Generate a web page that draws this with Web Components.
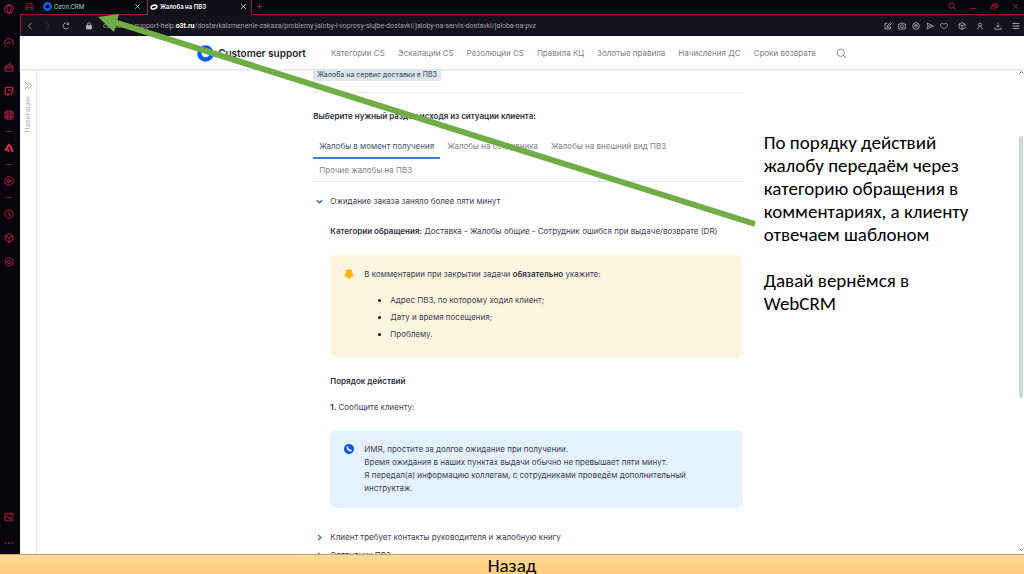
<!DOCTYPE html>
<html lang="ru">
<head>
<meta charset="utf-8">
<title>Жалоба на ПВЗ</title>
<style>
    body {
        margin: 0;
        background: #fff;
        font-family: Inter, "Noto Sans", sans-serif;
    }
</style>
</head>
<body>
<slide-page></slide-page>

<script>
// Icon drawings, all on a 16x16 grid
const ICONS = {
    opera: '<circle cx="8" cy="8" r="7"/><ellipse cx="8" cy="8" rx="3.4" ry="6"/>',
    gauge: '<path d="M4.500 14A7 7 0 1 1 14.500 10.500M11 6L7.500 9.500M5 9a3.400 3.400 0 0 1 3-3"/>',
    bag: '<path d="M2 6.5h12v8H2zM2 9.5h12M5 6.500L9.500 2l1.500 4.500"/>',
    twitch: '<path d="M3 2h11v8l-3 3H8l-2 2v-2H2V5zM7.500 5v3.500M11 5v3.500" stroke-width="2"/>',
    grid: '<rect x="1.500" y="1.500" width="13" height="13" rx="2"/><path d="M5 1.500v13M11 1.500v13M1.500 5h13M1.500 11h13M5 8h6"/>',
    aria: '<path d="M8.500 1.500L2 12.500M9.500 4l4.500 10M7.500 10l-1 4" stroke-width="3.200"/>',
    play: '<circle cx="8" cy="8" r="6.700"/><path d="M6 5l5.500 3L6 11z"/>',
    clock: '<circle cx="8" cy="8" r="6.700"/><path d="M8 3.500V8l2.500 3"/>',
    cube: '<path d="M8 1l6 3.300v7.200L8 15l-6-3.500V4.300zM2 4.300l6 3.500 6-3.500M8 7.800V15"/>',
    gear: '<path d="M8 1l3 1.500 3 2v7l-3 2L8 15l-3-1.500-3-2v-7l3-2z"/><circle cx="8" cy="8" r="2.500"/>',
    image: '<path d="M14.500 8V2h-13v12H8M1.500 10l4-3 3 3 2-2 2 1M4 5h2M9 4.500h3"/><circle cx="12" cy="12" r="2.500"/>',
    dots: '<path d="M1 8h3M6.500 8h3M12 8h3" stroke-width="2"/>',
    game: '<path d="M3.500 3h9v7h-9zM1.500 8v5h3v-3M14.500 8v5h-3v-3M4.500 6.500h2M9.500 6.500h2"/>',
    ring: '<circle cx="8" cy="8" r="5.700" stroke-width="4.200"/>',
    oval: '<ellipse cx="8" cy="8" rx="6" ry="3.600" transform="rotate(-18 8 8)" stroke-width="3.200"/>',
    close: '<path d="M2.500 2.500l11 11M13.500 2.500l-11 11"/>',
    plus: '<path d="M8 1.500v13M1.500 8h13"/>',
    search: '<circle cx="7" cy="7" r="5.300"/><path d="M11 11l4 4"/>',
    minimize: '<path d="M1 13h14"/>',
    restore: '<path d="M1.500 6h9v8h-9zM5 6V2h9.500v8h-4M5 10l3-3"/>',
    back: '<path d="M11 1.500L5 8l6 6.500"/>',
    forward: '<path d="M5 1.500L11 8l-6 6.500"/>',
    reload: '<path d="M13.500 10.500A6 6 0 1 1 13 4.500M13.500 1v4h-4"/>',
    lock: '<path d="M3 7h10v7H3z" fill="currentColor"/><path d="M5 7V4.500a3 3 0 0 1 6 0V7"/>',
    edit: '<path d="M7 2.500H2v11.500h11V9M6 10l1-3 6-6 2 2-6 6zM5 12h6"/>',
    camera: '<path d="M1.500 4h3l1.500-2h4l1.500 2h3v10h-13z"/><circle cx="8" cy="8.500" r="3"/>',
    shield: '<circle cx="8" cy="8" r="6.700"/><path d="M5.500 5.500h5v3L8 11 5.500 8.500zM8 6v3"/>',
    send: '<path d="M2 2l13 6-13 6 2-6zM4 8h6"/>',
    heart: '<path d="M8 14.500L2 8.500C-1 4 5 0 8 4.500 11 0 17 4 14 8.500z"/>',
    user: '<circle cx="8" cy="5" r="3.200"/><path d="M3.500 14.500c0-7 9-7 9 0"/>',
    download: '<path d="M8 1v9M4.500 7L8 10.500 11.500 7M1.500 11v3.500h13V11"/>',
    sliders: '<path d="M1 3h14M1 8h14M1 13h14M5 1.500v3M11 6.500v3M6 11.500v3"/>',
    chevrons: '<path d="M2 2l6 6-6 6M8 2l6 6-6 6"/>',
    down: '<path d="M2 5l6 6 6-6"/>',
    right: '<path d="M5 2l6 6-6 6"/>',
    up: '<path d="M2 11l6-6 6 6"/>',
    bell: '<path d="M8 0.500a5.300 5.300 0 0 1 5.300 5.300L16 12H0L2.700 5.800A5.300 5.300 0 0 1 8 .5zM4.500 12h7a3.500 3.500 0 0 1-7 0z" fill="currentColor" stroke="none"/>',
    phone: '<circle cx="8" cy="8" r="8" fill="currentColor" stroke="none"/><path d="M5.500 4c0 4.500 2 6.500 6.500 6.500" stroke="#fff" stroke-width="2.600"/>'
};

// Square icon, sized with --size, line weight with --stroke
class UiIcon extends HTMLElement {
    connectedCallback() {
        if (this.shadowRoot) return;
        this.attachShadow({ mode: 'open' }).innerHTML = `
            <style>
                :host { display: block; flex: none; width: var(--size, 9px); height: var(--size, 9px); }
                svg { display: block; width: 100%; height: 100%; fill: none; stroke: currentColor; stroke-width: var(--stroke, 1.6); }
            </style>
            <svg viewBox="0 0 16 16" aria-hidden="true">${ICONS[this.getAttribute('name')]}</svg>
        `;
    }
}
customElements.define('ui-icon', UiIcon);

const RESET = `
    * { box-sizing: border-box; }
    button { margin: 0; padding: 0; border: 0; background: none; font: inherit; color: inherit; text-align: left; cursor: pointer; }
    a { color: inherit; text-decoration: none; }
`;

// Narrow launcher strip at the left
class SideStrip extends HTMLElement {
    constructor() {
        super();
        const button = (name, label) => `<button class="${name}" aria-label="${label}"><ui-icon name="${name}"></ui-icon></button>`;
        this.attachShadow({ mode: 'open' }).innerHTML = `
            <style>${RESET}
                :host {
                    display: flex;
                    flex-direction: column;
                    align-items: center;
                    gap: 14px;
                    padding: 4px 3px 6px 0;
                    background: #06050b;
                    color: #b51f45;
                    --size: 10px;
                }
                .opera { margin-bottom: 10px; }
                hr { width: 6px; height: 1px; margin: -3px 0; border: 0; background: #7e1934; }
                .end { display: flex; flex-direction: column; gap: 16px; margin-top: auto; }
                .aria { color: #f52c55; }
            </style>
            ${button('opera', 'Меню')}
            ${button('gauge', 'Монитор')}
            ${button('bag', 'Магазин')}
            ${button('twitch', 'Twitch')}
            ${button('grid', 'Виджеты')}
            <hr>
            ${button('aria', 'Aria')}
            <hr>
            ${button('play', 'Плеер')}
            <hr>
            ${button('clock', 'История')}
            ${button('cube', 'Расширения')}
            ${button('gear', 'Настройки')}
            <div class="end">
                ${button('image', 'Обои')}
                ${button('dots', 'Ещё')}
            </div>
        `;
    }
}
customElements.define('side-strip', SideStrip);

// Tabs of the browser window
class TabStrip extends HTMLElement {
    constructor() {
        super();
        this.attachShadow({ mode: 'open' }).innerHTML = `
            <style>${RESET}
                :host {
                    display: flex;
                    height: 15px;
                    background: #06050b;
                    color: #c9c7cf;
                    font: 6px/13px Inter, "Noto Sans", sans-serif;
                    --size: 7px;
                }
                .lead, .tab, .rest { display: flex; align-items: center; border-bottom: 1px solid #8f1d3b; }
                .lead { width: 22px; padding: 0 0 2px 5px; color: #a51c40; --size: 9px; }
                .tab { width: 105px; padding: 0 6px 2px 1px; }
                .tab button:last-child { margin-left: auto; }
                .tab ui-icon[name="ring"] { color: #1463ff; --size: 9px; }
                .tab.active {
                    padding: 0 4px 2px 2px;
                    border: solid #8f1d3b;
                    border-width: 0 1px;
                    background: #110f18;
                    color: #fff;
                    font-weight: 600;
                }
                .tab.active ui-icon[name="oval"] { --size: 8px; }
                .title { display: flex; align-items: center; gap: 2px; }
                .rest { flex: 1; gap: 14px; padding: 0 5px 2px 4px; color: #d0234d; }
                .rest button:nth-child(2) { margin-left: auto; --size: 8px; }
            </style>
            <div class="lead"><ui-icon name="game"></ui-icon></div>
            <div class="tab">
                <button class="title"><ui-icon name="ring"></ui-icon>Ozon.CRM</button>
                <button aria-label="Закрыть вкладку"><ui-icon name="close"></ui-icon></button>
            </div>
            <div class="tab active">
                <button class="title"><ui-icon name="oval"></ui-icon>Жалоба на ПВЗ</button>
                <button aria-label="Закрыть вкладку"><ui-icon name="close"></ui-icon></button>
            </div>
            <div class="rest">
                <button aria-label="Новая вкладка"><ui-icon name="plus"></ui-icon></button>
                <button aria-label="Поиск"><ui-icon name="search"></ui-icon></button>
                <button aria-label="Свернуть"><ui-icon name="minimize"></ui-icon></button>
                <button aria-label="Развернуть"><ui-icon name="restore"></ui-icon></button>
                <button aria-label="Закрыть"><ui-icon name="close"></ui-icon></button>
            </div>
        `;
    }
}
customElements.define('tab-strip', TabStrip);

// Address bar with the page tools
class AddressBar extends HTMLElement {
    constructor() {
        super();
        this.attachShadow({ mode: 'open' }).innerHTML = `
            <style>${RESET}
                :host {
                    display: flex;
                    align-items: center;
                    height: 21px;
                    padding: 0 4px 0 5px;
                    border-left: 1px solid #8f1d3b;
                    background: #14121b;
                    color: #b5b3bb;
                    font: 7px/12px Roboto, "Noto Sans", sans-serif;
                    --size: 8px;
                }
                .nav { display: flex; gap: 10px; margin-right: 15px; }
                .nav button:nth-child(2) { opacity: .3; }
                .url { margin-left: 10px; white-space: nowrap; color: #a3a1aa; }
                .url b { color: #fff; }
                .tools { display: flex; gap: 6px; margin-left: auto; }
                .tools button:nth-child(n + 6) { margin-left: 4px; }
            </style>
            <div class="nav">
                <button aria-label="Назад"><ui-icon name="back"></ui-icon></button>
                <button aria-label="Вперёд"><ui-icon name="forward"></ui-icon></button>
                <button aria-label="Обновить"><ui-icon name="reload"></ui-icon></button>
            </div>
            <ui-icon name="lock"></ui-icon>
            <a class="url" href="#">customer-support-help.<b>o3t.ru</b>/dostavkaizmenenie-zakaza/problemy-jaloby-i-voprosy-slujbe-dostavki/jaloby-na-servis-dostavki/jaloba-na-pvz</a>
            <div class="tools">
                <button aria-label="Заметка"><ui-icon name="edit"></ui-icon></button>
                <button aria-label="Снимок"><ui-icon name="camera"></ui-icon></button>
                <button aria-label="Защита"><ui-icon name="shield"></ui-icon></button>
                <button aria-label="Отправить"><ui-icon name="send"></ui-icon></button>
                <button aria-label="В избранное"><ui-icon name="heart"></ui-icon></button>
                <button aria-label="Расширения"><ui-icon name="cube"></ui-icon></button>
                <button aria-label="Профиль"><ui-icon name="user"></ui-icon></button>
                <button aria-label="Загрузки"><ui-icon name="download"></ui-icon></button>
                <button aria-label="Настройки"><ui-icon name="sliders"></ui-icon></button>
            </div>
        `;
    }
}
customElements.define('address-bar', AddressBar);

// Site header with the logo and links
class SiteHeader extends HTMLElement {
    constructor() {
        super();
        this.attachShadow({ mode: 'open' }).innerHTML = `
            <style>${RESET}
                :host {
                    box-sizing: border-box;
                    display: flex;
                    align-items: center;
                    justify-content: center;
                    height: 34px;
                    padding-top: 1px;
                    border-bottom: 1px solid #e4e5e8;
                    box-shadow: 0 1px 1px #f3f3f5;
                    background: #fff;
                    color: #7d8087;
                    font-size: 8px;
                    line-height: 13px;
                    white-space: nowrap;
                }
                .brand { display: flex; align-items: center; gap: 4px; margin-right: 25px; color: #1c1f26; font-size: 10px; font-weight: 600; }
                .brand ui-icon { color: #0b5cff; --size: 17px; }
                nav { display: flex; gap: 13px; margin-right: 20px; }
                .search { --size: 11px; --stroke: 1.4; }
            </style>
            <a class="brand" href="#"><ui-icon name="ring"></ui-icon>Customer support</a>
            <nav>
                <a href="#">Категории CS</a>
                <a href="#">Эскалации CS</a>
                <a href="#">Резолюции CS</a>
                <a href="#">Правила КЦ</a>
                <a href="#">Золотые правила</a>
                <a href="#">Начисления ДС</a>
                <a href="#">Сроки возврата</a>
            </nav>
            <button class="search" aria-label="Поиск"><ui-icon name="search"></ui-icon></button>
        `;
    }
}
customElements.define('site-header', SiteHeader);

// Coloured note: icon at the left, slotted text at the right
class NoteBox extends HTMLElement {
    constructor() {
        super();
        this.attachShadow({ mode: 'open' }).innerHTML = `
            <style>
                :host {
                    display: flex;
                    gap: 10px;
                    padding: 13px 14px;
                    border-radius: 7px;
                    background: var(--note-bg);
                }
                ui-icon { margin-top: 1px; color: var(--note-accent); --size: 10px; }
                .text { flex: 1; }
            </style>
            <ui-icon name="${this.getAttribute('icon')}"></ui-icon>
            <div class="text"><slot></slot></div>
        `;
    }
}
customElements.define('note-box', NoteBox);

// Expandable row
class FoldRow extends HTMLElement {
    constructor() {
        super();
        const open = this.hasAttribute('open');
        this.attachShadow({ mode: 'open' }).innerHTML = `
            <style>${RESET}
                :host { display: block; }
                button { display: flex; align-items: center; gap: 7px; padding-left: 3px; }
                ui-icon { color: #2463cf; --size: 7px; --stroke: 3; }
                .body { padding-left: 17px; }
            </style>
            <button aria-expanded="${open}"><ui-icon name="${open ? 'down' : 'right'}"></ui-icon><slot name="title"></slot></button>
            <div class="body"><slot></slot></div>
        `;
    }
}
customElements.define('fold-row', FoldRow);

// The article itself
class HelpArticle extends HTMLElement {
    constructor() {
        super();
        this.attachShadow({ mode: 'open' }).innerHTML = `
            <style>${RESET}
                :host {
                    display: block;
                    min-width: 0;
                    color: #3c4250;
                    font-size: 8px;
                    line-height: 13px;
                }
                p, ul, h2, h3 { margin: 0; font-size: inherit; }
                h2, h3, b { font-weight: 600; color: #2b303c; }
                .top { display: flex; align-items: flex-start; height: 23px; border-bottom: 1px solid #eeeff1; }
                .chip { padding: 0 4px 1px; border-radius: 0 0 2px 2px; background: #dfe6ee; color: #4d5868; font-size: 7px; font-weight: 500; line-height: 10px; }
                h2 { margin: 17px 0 12px; }
                .tabs { display: flex; flex-wrap: wrap; column-gap: 1px; border-bottom: 1px solid #e3e4e7; color: #7f838b; }
                .tabs button { height: 24px; padding: 0 6px; border-bottom: 2px solid transparent; }
                .tabs .on { border-color: #3d7fd0; color: #3f5668; }
                .tabs button:last-child { height: 22px; border: 0; }
                fold-row[open] { margin: 13px 0 23px; }
                .category { margin: 17px 0; }
                note-box ul { margin-top: 13px; padding-left: 26px; list-style: disc; }
                li { margin-bottom: 4px; }
                li::marker { color: #111; }
                .warn { --note-bg: #fdf5e0; --note-accent: #fcb500; }
                .info { --note-bg: #e5f1fe; --note-accent: #0b53e8; }
                h3 { margin: 17px 0 13px; }
                .step { margin-bottom: 16px; }
                fold-row + fold-row { margin-top: 5px; }
            </style>
            <div class="top"><span class="chip">Жалоба на сервис доставки в ПВЗ</span></div>
            <h2>Выберите нужный раздел исходя из ситуации клиента:</h2>
            <div class="tabs" role="tablist">
                <button class="on" role="tab" aria-selected="true">Жалобы в момент получения</button>
                <button role="tab">Жалобы на сотрудника</button>
                <button role="tab">Жалобы на внешний вид ПВЗ</button>
                <button role="tab">Прочие жалобы на ПВЗ</button>
            </div>
            <fold-row open>
                <span slot="title">Ожидание заказа заняло более пяти минут</span>
                <p class="category"><b>Категории обращения:</b> Доставка - Жалобы общие - Сотрудник ошибся при выдаче/возврате (DR)</p>
                <note-box class="warn" icon="bell">
                    <p>В комментарии при закрытии задачи <b>обязательно</b> укажите:</p>
                    <ul>
                        <li>Адрес ПВЗ, по которому ходил клиент;</li>
                        <li>Дату и время посещения;</li>
                        <li>Проблему.</li>
                    </ul>
                </note-box>
                <h3>Порядок действий</h3>
                <p class="step"><b>1.</b> Сообщите клиенту:</p>
                <note-box class="info" icon="phone">
                    <p>ИМЯ, простите за долгое ожидание при получении.</p>
                    <p>Время ожидания в наших пунктах выдачи обычно не превышает пяти минут.</p>
                    <p>Я передал(а) информацию коллегам, с сотрудниками проведём дополнительный инструктаж.</p>
                </note-box>
            </fold-row>
            <fold-row><span slot="title">Клиент требует контакты руководителя и жалобную книгу</span></fold-row>
            <fold-row><span slot="title">Сотрудник ПВЗ</span></fold-row>
        `;
    }
}
customElements.define('help-article', HelpArticle);

// Scrollbar at the right edge
class PageScroll extends HTMLElement {
    constructor() {
        super();
        this.attachShadow({ mode: 'open' }).innerHTML = `
            <style>
                :host { display: grid; grid-template-rows: 7px 59fr 262fr 149fr 7px; width: 5px; color: #555a63; --size: 5px; --stroke: 3; }
                .thumb { grid-row: 3; margin-right: 1px; border-radius: 2px; background: #cdd7e4; }
                ui-icon:last-child { grid-row: 5; }
            </style>
            <ui-icon name="up"></ui-icon>
            <div class="thumb"></div>
            <ui-icon name="down"></ui-icon>
        `;
    }
}
customElements.define('page-scroll', PageScroll);

// Green pointer drawn over the window
class PointerArrow extends HTMLElement {
    constructor() {
        super();
        this.attachShadow({ mode: 'open' }).innerHTML = `
            <style>
                :host { position: absolute; inset: 0; pointer-events: none; }
                svg { display: block; width: 100%; height: 100%; }
            </style>
            <svg viewBox="0 0 1024 574" preserveAspectRatio="none" aria-hidden="true">
                <path d="M114 22L755 224" stroke="#70ad47" stroke-width="6"/>
                <path d="M98 17L119 14L114 32Z" fill="#70ad47"/>
            </svg>
        `;
    }
}
customElements.define('pointer-arrow', PointerArrow);

// Whole slide: browser window, remark and the back button
class SlidePage extends HTMLElement {
    constructor() {
        super();
        this.attachShadow({ mode: 'open' }).innerHTML = `
            <style>${RESET}
                :host {
                    display: grid;
                    grid-template: minmax(0, 1fr) 20px / 20px minmax(0, 1fr);
                    position: relative;
                    height: 100vh;
                    overflow: hidden;
                }
                .window { display: flex; flex-direction: column; min-height: 0; }
                .view {
                    display: grid;
                    grid-template: minmax(0, 1fr) / 17px 276fr 429fr 276fr auto;
                    flex: 1;
                    min-height: 0;
                    overflow: hidden;
                }
                .rail {
                    display: flex;
                    flex-direction: column;
                    align-items: center;
                    gap: 6px;
                    padding-top: 11px;
                    border-right: 1px solid #e6e7ea;
                    color: #8a8d94;
                    font-size: 7px;
                    line-height: 10px;
                    --size: 9px;
                }
                .rail span { writing-mode: vertical-rl; transform: rotate(180deg); color: #b4b6bb; }
                help-article { grid-column: 3; }
                .remark {
                    padding: 61px 40px 0 21px;
                    color: #000;
                    font: 19px/23px Carlito, "Open Sans", sans-serif;
                }
                .remark p { margin: 0 0 23px; }
                .back {
                    grid-column: 1 / -1;
                    padding-top: 3px;
                    border-top: 1px solid #bba56c;
                    background: linear-gradient(#ffdb97, #ffcd7d);
                    color: #000;
                    font: 19px/16px Carlito, "Open Sans", sans-serif;
                    text-align: center;
                }
            </style>
            <side-strip></side-strip>
            <div class="window">
                <tab-strip></tab-strip>
                <address-bar></address-bar>
                <site-header></site-header>
                <div class="view">
                    <button class="rail"><ui-icon name="chevrons"></ui-icon><span>Навигация</span></button>
                    <help-article></help-article>
                    <aside class="remark">
                        <p>По порядку действий жалобу передаём через категорию обращения в комментариях, а клиенту отвечаем шаблоном</p>
                        <p>Давай вернёмся в WebCRM</p>
                    </aside>
                    <page-scroll></page-scroll>
                </div>
            </div>
            <button class="back">Назад</button>
            <pointer-arrow></pointer-arrow>
        `;
    }
}
customElements.define('slide-page', SlidePage);
</script>
</body>
</html>
